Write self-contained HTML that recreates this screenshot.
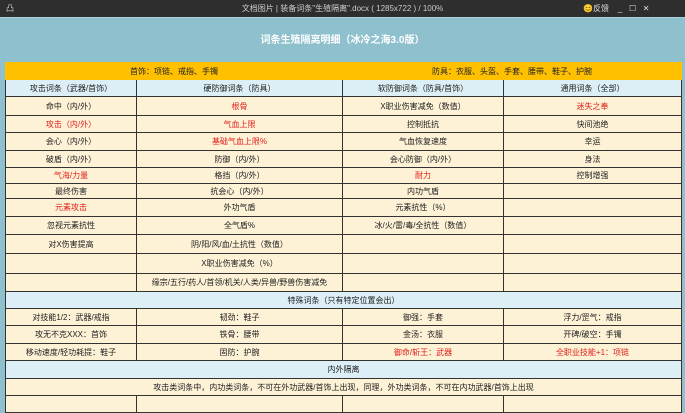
<!DOCTYPE html>
<html><head><meta charset="utf-8"><style>
body{margin:0;width:685px;height:400px;overflow:hidden;background:#8fc0cd;font-family:"Liberation Sans","Noto Sans CJK SC",sans-serif;position:relative}
.bar{position:absolute;left:0;top:0;width:685px;height:17px;background:#2e2e2e;color:#ccc;font-size:8px;line-height:17px}
.bar .t{position:absolute;left:0;width:685px;text-align:center}
.hdr{position:absolute;left:0;top:17px;width:685px;height:46px;background:#8fc0cd;color:#fff;font-weight:bold;font-size:10px;text-align:center;line-height:46px;border-top:1px solid #a8d0dc}
table{position:absolute;left:5px;top:62px;width:676px;border-collapse:collapse;table-layout:fixed;font-size:8px}
td{border:1px solid #333;text-align:center;padding:0;background:#fdf1d6;color:#222;overflow:hidden;white-space:nowrap}
.y td{background:#ffc000;border-color:#ffc000}
.b td,td.b{background:#dceff7}
.r{color:#e0201a}
</style></head><body>
<div class="bar"><span style="position:absolute;left:6px">凸</span><span class="t">文档图片 | 装备词条"生殖隔离".docx ( 1285x722 ) / 100%</span><span style="position:absolute;left:583px;color:#ddd">😊反馈 &nbsp;&nbsp; _ &nbsp; ☐ &nbsp; ✕</span></div>
<div class="hdr">词条生殖隔离明细（冰冷之海3.0版）</div>
<table>
<colgroup><col style="width:131px"><col style="width:206px"><col style="width:161px"><col style="width:178px"></colgroup>
<tr class="y" style="height:17px"><td colspan="2">首饰：项链、戒指、手镯</td><td colspan="2">防具：衣服、头盔、手套、腰带、鞋子、护腕</td></tr>
<tr class="b" style="height:17px"><td>攻击词条（武器/首饰）</td><td>硬防御词条（防具）</td><td>软防御词条（防具/首饰）</td><td>通用词条（全部）</td></tr>
<tr style="height:19px"><td>命中（内/外）</td><td class="r">根骨</td><td>X职业伤害减免（数值）</td><td class="r">迷失之奉</td></tr>
<tr style="height:17px"><td class="r">攻击（内/外）</td><td class="r">气血上限</td><td>控制抵抗</td><td>快间池绝</td></tr>
<tr style="height:18px"><td>会心（内/外）</td><td class="r">基础气血上限%</td><td>气血恢复速度</td><td>幸运</td></tr>
<tr style="height:17px"><td>破盾（内/外）</td><td>防御（内/外）</td><td>会心防御（内/外）</td><td>身法</td></tr>
<tr style="height:16px"><td class="r">气海/力量</td><td>格挡（内/外）</td><td class="r">耐力</td><td>控制增强</td></tr>
<tr style="height:15px"><td>最终伤害</td><td>抗会心（内/外）</td><td>内功气盾</td><td></td></tr>
<tr style="height:18px"><td class="r">元素攻击</td><td>外功气盾</td><td>元素抗性（%）</td><td></td></tr>
<tr style="height:18px"><td>忽视元素抗性</td><td>全气盾%</td><td>冰/火/雷/毒/全抗性（数值）</td><td></td></tr>
<tr style="height:19px"><td>对X伤害提高</td><td>阴/阳/风/血/土抗性（数值）</td><td></td><td></td></tr>
<tr style="height:20px"><td></td><td>X职业伤害减免（%）</td><td></td><td></td></tr>
<tr style="height:18px"><td></td><td>缘宗/五行/药人/首领/机关/人类/异兽/野兽伤害减免</td><td></td><td></td></tr>
<tr class="b" style="height:17px"><td colspan="4">特殊词条（只有特定位置会出）</td></tr>
<tr style="height:17px"><td>对技能1/2：武器/戒指</td><td>韧劲：鞋子</td><td>御强：手套</td><td>浮力/罡气：戒指</td></tr>
<tr style="height:18px"><td>攻无不克XXX：首饰</td><td>铁骨：腰带</td><td>金汤：衣服</td><td>开碑/破空：手镯</td></tr>
<tr style="height:17px"><td>移动速度/轻功耗提：鞋子</td><td>固防：护腕</td><td class="r">御命/斩王：武器</td><td class="r">全职业技能+1：项链</td></tr>
<tr class="b" style="height:18px"><td colspan="4">内外隔离</td></tr>
<tr style="height:17px"><td colspan="4">攻击类词条中，内功类词条，不可在外功武器/首饰上出现，同理，外功类词条，不可在内功武器/首饰上出现</td></tr>
<tr style="height:17px"><td></td><td></td><td></td><td></td></tr>
</table>
</body></html>
